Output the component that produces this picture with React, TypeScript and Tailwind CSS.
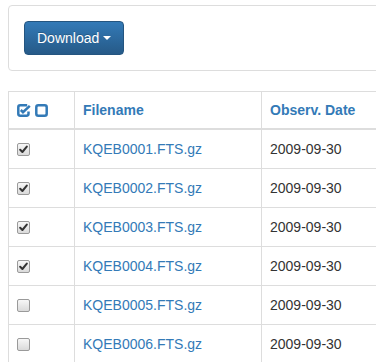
import React from "react";

const rows = [
  { name: "KQEB0001.FTS.gz", checked: true },
  { name: "KQEB0002.FTS.gz", checked: true },
  { name: "KQEB0003.FTS.gz", checked: true },
  { name: "KQEB0004.FTS.gz", checked: true },
  { name: "KQEB0005.FTS.gz", checked: false },
  { name: "KQEB0006.FTS.gz", checked: false },
];

function Box({ checked }: { checked: boolean }) {
  return (
    <span className="relative inline-flex w-[13px] h-[13px] rounded-[2px] border border-[#9a9a9a] bg-gradient-to-b from-[#f7f7f7] to-[#dadada] items-center justify-center">
      {checked && (
        <svg width="9" height="9" viewBox="0 0 9 9">
          <path d="M1.2 4.8 L3.4 7 L7.8 1.6" fill="none" stroke="#333" strokeWidth="2" strokeLinecap="round" strokeLinejoin="round" />
        </svg>
      )}
    </span>
  );
}

export default function App() {
  return (
    <div className="w-[376px] h-[362px] overflow-hidden bg-white text-[14px] leading-[20px] text-[#333]" style={{ fontFamily: '"Liberation Sans", Arial, sans-serif' }}>
      <div className="ml-[8px] mt-[5px] w-[440px] border border-[#ddd] rounded-[4px] p-[15px]">
        <button className="flex items-center h-[34px] w-[100px] px-[12px] rounded-[4px] border border-[#245580] bg-gradient-to-b from-[#337ab7] to-[#265a88] text-white [text-shadow:0_-1px_0_rgba(0,0,0,0.2)]">
          <span>Download</span>
          <span className="ml-[4px] w-0 h-0 border-t-[4px] border-t-white border-x-[4px] border-x-transparent" />
        </button>
      </div>

      <div className="ml-[8px] mt-[20px] w-[440px] grid grid-cols-[66px_187px_187px]">
        {/* header */}
        <div className="h-[39px] border-t border-l border-b-2 border-[#ddd] flex items-center pl-[8px] gap-[4px]">
          <svg width="14" height="13" viewBox="0 0 14 13">
            <path d="M10.2 1.3 H3.2 Q1.3 1.3 1.3 3.2 V9.8 Q1.3 11.7 3.2 11.7 H9.6 Q11.5 11.7 11.5 9.8 V7.6" fill="none" stroke="#337ab7" strokeWidth="2.5" />
            <path d="M3.8 6 L6 8.2 L12.8 1.8" fill="none" stroke="#337ab7" strokeWidth="2.5" />
          </svg>
          <svg width="13" height="13" viewBox="0 0 13 13">
            <rect x="1.3" y="1.3" width="10.4" height="10.4" rx="2" fill="none" stroke="#337ab7" strokeWidth="2.5" />
          </svg>
        </div>
        <div className="h-[39px] border-t border-l border-b-2 border-[#ddd] flex items-center pl-[8px] font-bold text-[#337ab7]">
          Filename
        </div>
        <div className="h-[39px] border-t border-l border-b-2 border-[#ddd] flex items-center pl-[8px] font-bold text-[#337ab7]">
          Observ. Date
        </div>

        {rows.map((r, i) => (
          <React.Fragment key={r.name}>
            <div className={`${i === 0 ? "h-[38px]" : "h-[39px] border-t"} border-l border-[#ddd] flex items-center pl-[8px]`}>
              <Box checked={r.checked} />
            </div>
            <div className={`${i === 0 ? "h-[38px]" : "h-[39px] border-t"} border-l border-[#ddd] flex items-center pl-[8px] text-[#337ab7]`}>
              {r.name}
            </div>
            <div className={`${i === 0 ? "h-[38px]" : "h-[39px] border-t"} border-l border-[#ddd] flex items-center pl-[8px]`}>
              2009-09-30
            </div>
          </React.Fragment>
        ))}
      </div>
    </div>
  );
}
